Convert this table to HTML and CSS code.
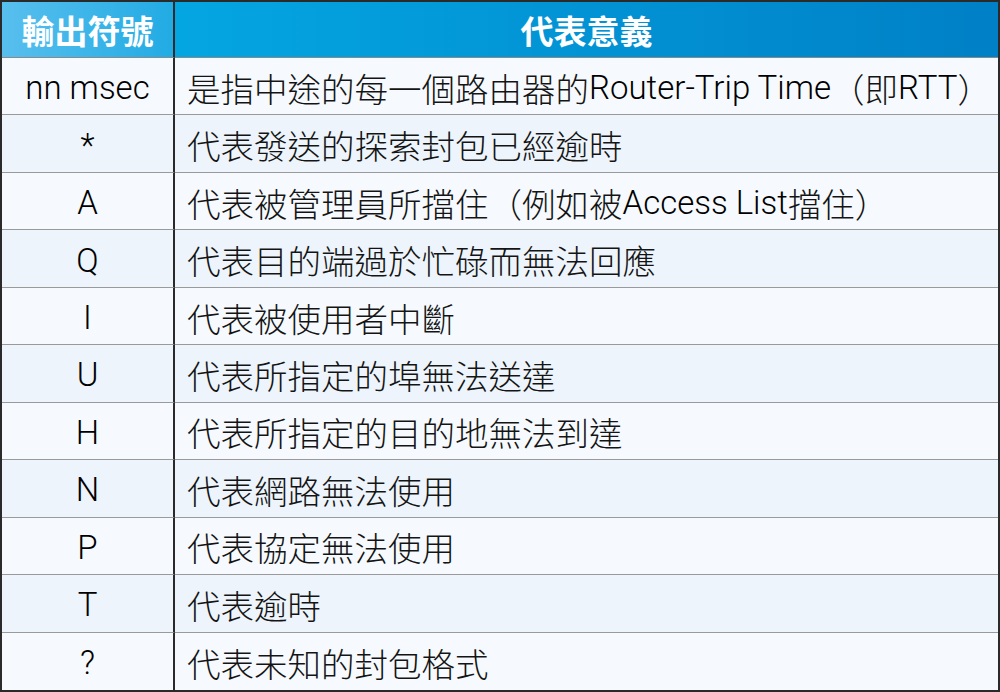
FILE: index.html
```html
<!DOCTYPE html>
<html lang="zh-Hant">
<head>
<meta charset="utf-8">
<title>輸出符號</title>
<link rel="stylesheet" href="styles.css">
</head>
<body>
<div class="table">
  <div class="head head-sym">輸出符號</div>
  <div class="head head-desc">代表意義</div>

  <div class="sym odd">nn msec</div>
  <div class="desc odd">是指中途的每一個路由器的<span class="lat">Router-Trip Time</span>（即<span class="lat">RTT</span>）</div>

  <div class="sym even">*</div>
  <div class="desc even">代表發送的探索封包已經逾時</div>

  <div class="sym odd">A</div>
  <div class="desc odd">代表被管理員所擋住（例如被<span class="lat">Access List</span>擋住）</div>

  <div class="sym even">Q</div>
  <div class="desc even">代表目的端過於忙碌而無法回應</div>

  <div class="sym odd">I</div>
  <div class="desc odd">代表被使用者中斷</div>

  <div class="sym even">U</div>
  <div class="desc even">代表所指定的埠無法送達</div>

  <div class="sym odd">H</div>
  <div class="desc odd">代表所指定的目的地無法到達</div>

  <div class="sym even">N</div>
  <div class="desc even">代表網路無法使用</div>

  <div class="sym odd">P</div>
  <div class="desc odd">代表協定無法使用</div>

  <div class="sym even">T</div>
  <div class="desc even">代表逾時</div>

  <div class="sym odd">?</div>
  <div class="desc odd">代表未知的封包格式</div>
</div>
</body>
</html>
```
FILE: styles.css
```css
html, body {
  margin: 0;
  padding: 0;
  background: #ffffff;
}

.table {
  width: 1000px;
  height: 692px;
  box-sizing: border-box;
  border: 2px solid #2a2a2a;
  display: grid;
  grid-template-columns: 173px 1fr;
  grid-template-rows: 56px repeat(11, 1fr);
  font-family: "Liberation Sans", "Noto Sans CJK TC", sans-serif;
  color: #141414;
}

.head {
  display: flex;
  align-items: center;
  justify-content: center;
  color: #ffffff;
  font-size: 33px;
  font-weight: 700;
  border-bottom: 1px solid #8a8a8a;
}

.head-sym {
  background: linear-gradient(to right, #58bfee, #22abe4);
  border-right: 2px solid #2a2a2a;
}

.head-desc {
  background: linear-gradient(to right, #04a6e2, #0080c6);
}

.sym {
  display: flex;
  align-items: center;
  justify-content: center;
  padding-top: 3px;
  font-family: "Roboto", "Liberation Sans", sans-serif;
  font-size: 33px;
  font-weight: 300;
  color: #000000;
  border-right: 2px solid #2a2a2a;
  border-bottom: 1px solid #9a9a9a;
}

.desc {
  display: flex;
  align-items: center;
  padding-left: 12px;
  padding-top: 2px;
  font-size: 33.5px;
  font-weight: 300;
  white-space: nowrap;
  border-bottom: 1px solid #9a9a9a;
}

.table > div:nth-last-child(-n+2) {
  border-bottom: none;
}

.lat {
  font-family: "Roboto", "Liberation Sans", sans-serif;
  font-size: 33px;
  font-weight: 300;
  color: #000000;
}

.odd {
  background: #f6fafe;
}

.even {
  background: #edf4fb;
}
```
